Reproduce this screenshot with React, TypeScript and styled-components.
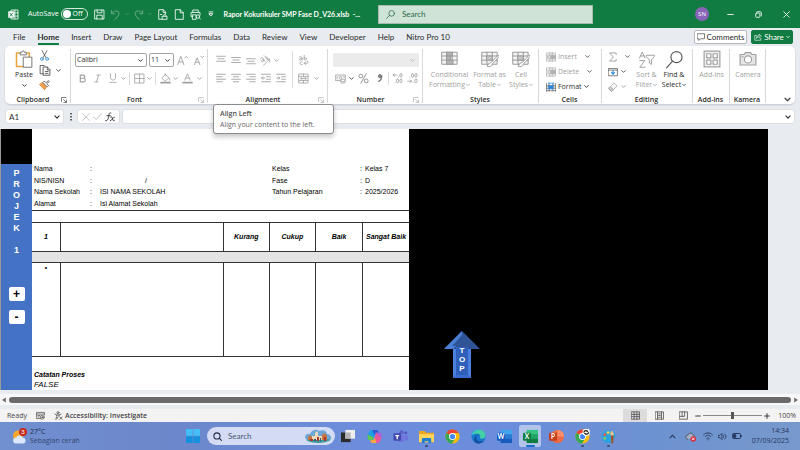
import React from "react";
import styled, { createGlobalStyle, css } from "styled-components";

const GREEN = "#107c41";
const INK = "#2b2b2b";
const FADED = "#a0a0a0";
const CHROME = "#e8ebf0";
const WIDE_TEXT = `Lato, "Open Sans", sans-serif`;

const GlobalStyle = createGlobalStyle`
  *, *::before, *::after { box-sizing: border-box; }
  html, body { margin: 0; padding: 0; }
  body { background: ${CHROME}; overflow: hidden; }
  body, button, input, select {
    font-family: "Open Sans", "Noto Sans", sans-serif;
    font-size: 7px;
    line-height: 10px;
    color: ${INK};
  }
  button, input, select { margin: 0; padding: 0; border: 0; background: none; outline: none; }
  svg { display: block; flex: none; }
`;

/* ---------- drawing helpers ---------- */

type IconProps = { w?: number; h?: number; box?: string; children: React.ReactNode; color?: string; sw?: number };
const Icon = ({ w = 12, h, box = "0 0 16 16", color = "currentColor", sw = 1.2, children }: IconProps) => (
  <svg width={w} height={h ?? w} viewBox={box} fill="none" stroke={color} strokeWidth={sw} strokeLinecap="round" strokeLinejoin="round" aria-hidden="true">
    {children}
  </svg>
);

const Chevron = ({ color = "currentColor", size = 5 }: { color?: string; size?: number }) => (
  <Icon w={size} box="0 0 10 10" color={color} sw={1.8}>
    <path d="M1.5 3.2 5 6.8 8.5 3.2" />
  </Icon>
);

/* ---------- page frame ---------- */

const Page = styled.div`
  display: flex;
  flex-direction: column;
  height: 100vh;
  background: ${CHROME};
`;

/* ---------- title bar ---------- */

const TitleBar = styled.header`
  display: grid;
  grid-template-columns: 370fr 215fr 199fr;
  align-items: center;
  height: 28px;
  padding: 0 8px;
  background: ${GREEN};
  color: #ffffff;
`;

const QuickAccess = styled.div`
  display: flex;
  align-items: center;
  min-width: 0;
`;

const QuickButton = styled.button<{ $w: number; $dim?: boolean }>`
  display: flex;
  align-items: center;
  justify-content: center;
  width: ${(p) => p.$w}px;
  height: 16px;
  flex: none;
  color: ${(p) => (p.$dim ? "#5ba37c" : "#ffffff")};
`;

const AutoSave = styled.label`
  display: flex;
  align-items: center;
  gap: 2px;
  margin: 0 5px 0 9px;
  white-space: nowrap;
`;

const Toggle = styled.button`
  display: flex;
  align-items: center;
  gap: 2px;
  width: 27px;
  height: 12px;
  padding: 0 1px;
  border: 1px solid #d5e8dc;
  border-radius: 6px;
  color: #ffffff;
  &::before {
    content: "";
    width: 8px;
    height: 8px;
    border-radius: 50%;
    background: #ffffff;
  }
`;

const FileName = styled.span`
  margin-left: 5px;
  white-space: pre;
  font-family: ${WIDE_TEXT};
  font-weight: 700;
`;

const TitleSearch = styled.label`
  display: flex;
  align-items: center;
  gap: 7px;
  height: 19px;
  padding: 0 7px;
  border: 1px solid #a9b9ae;
  background: #cfe3d6;
  color: #286847;
`;

const TitleInput = styled.input`
  flex: 1;
  min-width: 0;
  font-family: ${WIDE_TEXT};
  font-size: 8px;
  &::placeholder { color: #286847; opacity: 1; }
`;

const WindowControls = styled.div`
  display: flex;
  align-items: center;
  justify-content: flex-end;
  height: 100%;
`;

const Avatar = styled.button`
  width: 14px;
  height: 14px;
  margin-right: 7px;
  border-radius: 50%;
  background: #8764b8;
  color: #ffffff;
  font-size: 6px;
`;

const WindowButton = styled.button`
  display: flex;
  align-items: center;
  justify-content: center;
  width: 28px;
  height: 28px;
  color: #ffffff;
  &:last-child { margin-right: -8px; }
`;

/* ---------- tabs ---------- */

const TabRow = styled.nav`
  display: flex;
  align-items: center;
  gap: 12px;
  height: 18px;
  padding: 0 7px 0 13px;
`;

const Tab = styled.button<{ $active?: boolean }>`
  height: 18px;
  font-family: ${WIDE_TEXT};
  font-size: 8px;
  white-space: nowrap;
  ${(p) =>
    p.$active &&
    css`
      font-weight: 700;
      border-bottom: 2px solid ${GREEN};
      padding-top: 1px;
      height: 16px;
    `}
`;

const TabActions = styled.div`
  display: flex;
  gap: 4px;
  margin-left: auto;
`;

const ActionButton = styled.button<{ $primary?: boolean }>`
  display: flex;
  align-items: center;
  justify-content: center;
  gap: 2px;
  width: ${(p) => (p.$primary ? 42 : 53)}px;
  height: 14px;
  border: 1px solid ${(p) => (p.$primary ? GREEN : "#b9b9b9")};
  border-radius: 2px;
  background: ${(p) => (p.$primary ? GREEN : "#ffffff")};
  color: ${(p) => (p.$primary ? "#ffffff" : INK)};
  font-family: ${WIDE_TEXT};
  font-size: 8px;
`;

/* ---------- ribbon ---------- */

const Ribbon = styled.section`
  display: grid;
  grid-template-columns: 66fr 137fr 120fr 95fr 116fr 63fr 91fr 37fr 36fr 29fr;
  height: 58px;
  margin: 0 5px;
  border-radius: 5px;
  background: #ffffff;
  box-shadow: 0 1px 2px #c3c7cd;
`;

const GroupBox = styled.div`
  position: relative;
  display: flex;
  flex-direction: column;
  min-width: 0;
  &:not(:last-child)::after {
    content: "";
    position: absolute;
    top: 3px;
    bottom: 3px;
    right: 0;
    width: 1px;
    background: #d9d9d9;
  }
`;

const GroupBody = styled.div<{ $top: number; $left?: number; $center?: boolean }>`
  display: flex;
  flex: 1;
  padding: ${(p) => p.$top}px 0 0 ${(p) => p.$left ?? 0}px;
  justify-content: ${(p) => (p.$center ? "center" : "flex-start")};
`;

const GroupFooter = styled.div`
  display: flex;
  align-items: center;
  height: 12px;
  padding-right: 2px;
  font-weight: 600;
  text-align: center;
  white-space: nowrap;
`;

const FooterName = styled.span`
  flex: 1;
`;

const Launcher = styled.button<{ $dim?: boolean }>`
  width: 8px;
  color: ${(p) => (p.$dim ? "#b5b5b5" : "#555555")};
`;

const Stack = styled.div<{ $w?: number }>`
  display: flex;
  flex-direction: column;
  width: ${(p) => (p.$w ? `${p.$w}px` : "auto")};
`;

const ToolRow = styled.div<{ $h: number }>`
  display: flex;
  align-items: center;
  height: ${(p) => p.$h}px;
`;

const Tool = styled.button<{ $w: number; $on?: boolean }>`
  display: flex;
  align-items: center;
  justify-content: center;
  width: ${(p) => p.$w}px;
  height: 14px;
  flex: none;
  color: ${(p) => (p.$on ? "#444444" : FADED)};
`;

const Divider = styled.span<{ $h: number; $m?: number }>`
  width: 1px;
  height: ${(p) => p.$h}px;
  margin: 0 ${(p) => p.$m ?? 2}px;
  background: #dcdcdc;
`;

const BigTool = styled.button<{ $w: number; $on?: boolean }>`
  display: flex;
  flex-direction: column;
  align-items: center;
  width: ${(p) => p.$w}px;
  height: 40px;
  flex: none;
  white-space: nowrap;
  color: ${(p) => (p.$on ? INK : FADED)};
`;

const BigIcon = styled.span`
  display: flex;
  align-items: center;
  height: 18px;
  margin-bottom: 2px;
`;

const Line = styled.span`
  display: flex;
  align-items: center;
  gap: 1px;
  height: 10px;
`;

const SmallTool = styled.button<{ $on?: boolean; $gap?: number }>`
  display: flex;
  align-items: center;
  gap: 2px;
  height: 15px;
  color: ${(p) => (p.$on ? INK : FADED)};
  > svg:last-child { margin-left: ${(p) => p.$gap ?? 0}px; }
`;

const Picker = styled.label<{ $w: number; $off?: boolean }>`
  display: grid;
  grid-template-columns: 1fr 8px;
  align-items: center;
  width: ${(p) => p.$w}px;
  height: 14px;
  border: 1px solid ${(p) => (p.$off ? "#ebebeb" : "#a5a5a5")};
  border-radius: 2px;
  background: ${(p) => (p.$off ? "#ebebeb" : "#ffffff")};
  color: ${(p) => (p.$off ? "#b5b5b5" : INK)};
  & + & { margin-left: 2px; }
`;

const PickerSelect = styled.select`
  appearance: none;
  grid-column: 1 / -1;
  grid-row: 1;
  padding-left: 1px;
  width: 100%;
  height: 12px;
  & + svg { grid-column: 2; grid-row: 1; pointer-events: none; }
`;

const Tooltip = styled.div`
  position: absolute;
  z-index: 5;
  top: 58px;
  left: 5px;
  width: 121px;
  height: 30px;
  padding: 3px 6px;
  border: 1px solid #8c8c8c;
  border-radius: 3px;
  background: #ffffff;
  box-shadow: 0 3px 5px rgba(0, 0, 0, 0.22);
  color: #666666;
  white-space: nowrap;
  line-height: 11px;
`;

const TooltipTitle = styled.strong`
  display: block;
  color: #505050;
  font-weight: 600;
`;

type GroupProps = { name: string; top: number; left?: number; center?: boolean; launcher?: "on" | "off"; overlay?: React.ReactNode; children: React.ReactNode };
const Group = ({ name, top, left, center, launcher, overlay, children }: GroupProps) => (
  <GroupBox>
    <GroupBody $top={top} $left={left} $center={center}>{children}</GroupBody>
    <GroupFooter>
      <FooterName>{name}</FooterName>
      {launcher && (
        <Launcher $dim={launcher === "off"} aria-label={`${name} settings`}>
          <Icon w={6} box="0 0 12 12" sw={1.5}><path d="M1 9V1h9M5 5l5.500 5.500M11 6v5H6" /></Icon>
        </Launcher>
      )}
    </GroupFooter>
    {overlay}
  </GroupBox>
);

const Lines = ({ rows }: { rows: [number, number, number][] }) => (
  <Icon w={10} sw={1.4}>
    {rows.map(([a, b, y]) => <path key={y} d={`M${a} ${y}H${b}`} />)}
  </Icon>
);

const GridIcon = ({ w = 18, brush, cond }: { w?: number; brush?: boolean; cond?: boolean }) => (
  <Icon w={w} box="0 0 24 24" sw={1.3} color="#999999">
    <rect x="1.500" y="3" width="20" height="16" fill="#f4f4f4" />
    <path d="M1.500 8h20M1.500 13.500h20M8 3v16M15 3v16" />
    {cond && <path d="M8 3h7v5H8zM8 8h5v5.500H8zM8 13.500h8V19H8z" fill="#b5b5b5" />}
    {brush && <path d="M8 8h7v5.500H8z" fill="#c9c9c9" />}
    {brush && <path d="M23 7 13 17c-3-.5-3 3-5 4.500 3 1.500 7 .5 7-2.500L24 9z" fill="#ffffff" />}
  </Icon>
);

const CellIcon = ({ kind }: { kind: "insert" | "delete" | "format" }) => {
  const on = kind === "format";
  return (
    <Icon w={10} color={on ? "#555555" : "#a3a3a3"} sw={1.1}>
      {on ? (
        <>
          <path d="M1 2.500v12M15 2.500v12M1 14h14M1 6h14M5 3v11M11 3v11M1 10h14" />
          <path d="M4.500 1v2.500M11.500 1v2.500M4.500 2h7" stroke="#2b88d8" />
          <rect x="4.500" y="6" width="7" height="5" fill="#2b88d8" stroke="#2b88d8" />
        </>
      ) : (
        <>
          <rect x="1" y="1.500" width="14" height="13" />
          <path d="M1 5h14M1 11h14M10 1.500v13M6 1.500V5M6 11v3.500" />
          <path d={kind === "insert" ? "M8 8H2m2-2L2 8l2 2" : "m2 6 4 4m0-4-4 4"} />
          <rect x="8" y="6" width="7" height="4" fill="#b5b5b5" />
        </>
      )}
    </Icon>
  );
};

const RibbonEnd = styled.div`
  display: flex;
  align-items: flex-end;
  justify-content: flex-end;
`;

const RibbonBar = () => (
  <Ribbon>
    <Group name="Clipboard" top={4} left={5} launcher="on">
      <BigTool $w={28} $on>
        <BigIcon>
          <Icon w={18} box="0 0 24 24" sw={1.3}>
            <path d="M7 4H2v18h9M15 4h4v5" stroke="#e8a33d" strokeWidth="2" />
            <path d="M7 6V3h2.500c0-2.500 3-2.500 3 0H15v3z" stroke="#777777" fill="#ffffff" />
            <path d="M11.500 9.500h11V23h-11z" stroke="#777777" fill="#ffffff" />
          </Icon>
        </BigIcon>
        <Line>Paste</Line>
        <Line><Chevron size={5} /></Line>
      </BigTool>
      <Stack>
        <ToolRow $h={11}>
          <Tool $w={13} $on aria-label="Cut">
            <Icon w={11}><path d="M4.500 1 10 11M11.500 1 6 11" stroke="#555555" /><circle cx="4.200" cy="13" r="2" stroke="#2b88d8" /><circle cx="11.800" cy="13" r="2" stroke="#2b88d8" /></Icon>
          </Tool>
        </ToolRow>
        <ToolRow $h={18}>
          <Tool $w={13} $on aria-label="Copy">
            <Icon w={12} color="#555555"><path d="M6 13H1.500V2H7l1 1" /><path d="M6 4h5l3.500 3.500V15H6zM11 4v4h3.500M8.500 10h3.500M8.500 12.500h3.500" /></Icon>
          </Tool>
          <Tool $w={14} $on aria-label="Copy options"><Chevron /></Tool>
        </ToolRow>
        <ToolRow $h={12}>
          <Tool $w={13} $on aria-label="Format Painter">
            <Icon w={11}><path d="m1 7 7 7 3-4-6-6z" fill="#f2a04b" stroke="#d9812a" /><path d="m6 4 6 6 2-2-2.500-2.500L15 2l-1.500-1L10 4 8 2z" fill="#ffffff" stroke="#555555" /></Icon>
          </Tool>
        </ToolRow>
      </Stack>
    </Group>

    <Group name="Font" top={5} left={4} launcher="off">
      <Stack>
        <ToolRow $h={18}>
          <Picker $w={72}>
            <PickerSelect aria-label="Font name"><option>Calibri</option></PickerSelect>
            <Chevron />
          </Picker>
          <Picker $w={25}>
            <PickerSelect aria-label="Font size"><option>11</option></PickerSelect>
            <Chevron />
          </Picker>
          <Tool $w={16} aria-label="Increase font size">
            <Icon w={11} sw={1.3}><path d="m1 14 4.500-12L10 14M2.500 10h6M11.500 4l2-2 2 2" /></Icon>
          </Tool>
          <Tool $w={16} aria-label="Decrease font size">
            <Icon w={11} sw={1.3}><path d="m2 14 4-10 4 10M3.500 10.500h5M11.500 2l2 2 2-2" /></Icon>
          </Tool>
        </ToolRow>
        <ToolRow $h={18}>
          <Tool $w={15} aria-label="Bold"><Icon w={9} sw={2}><path d="M4 2h5c4 0 4 5.500 0 5.500H4zM4 7.500h6c4 0 4 6.500 0 6.500H4z" /></Icon></Tool>
          <Tool $w={15} aria-label="Italic"><Icon w={9} sw={1.4}><path d="M7 2h6M3 14h6M10 2 6 14" /></Icon></Tool>
          <Tool $w={15} aria-label="Underline"><Icon w={10} sw={1.3}><path d="M4 1v6.500c0 5 8 5 8 0V1M3 15h10" /></Icon></Tool>
          <Tool $w={7} aria-label="Underline options"><Chevron /></Tool>
          <Divider $h={13} />
          <Tool $w={14} aria-label="Borders"><Icon w={11}><path d="M1.500 1.500h13v13h-13zM8 1.500v13M1.500 8h13" /></Icon></Tool>
          <Tool $w={7} aria-label="Border options"><Chevron /></Tool>
          <Divider $h={13} />
          <Tool $w={14} aria-label="Fill color"><Icon w={11}><path d="m3 7 5-5 5 5-5 4.500zM7 1l2 3M14 8v2.500" /><path d="M1.500 14h13" strokeWidth="2.500" /></Icon></Tool>
          <Tool $w={7} aria-label="Fill options"><Chevron /></Tool>
          <Tool $w={17} aria-label="Font color"><Icon w={11}><path d="M4 10.500 8 1l4 9.500M5.500 7.500h5" /><path d="M1.500 14h13" strokeWidth="2.500" /></Icon></Tool>
          <Tool $w={7} aria-label="Font color options"><Chevron /></Tool>
        </ToolRow>
      </Stack>
    </Group>

    <Group
      name="Alignment"
      top={5}
      left={5}
      launcher="off"
      overlay={
        <Tooltip role="tooltip">
          <TooltipTitle>Align Left</TooltipTitle>
          Align your content to the left.
        </Tooltip>
      }
    >
      <Stack $w={77}>
        <ToolRow $h={18}>
          <Tool $w={15} aria-label="Top Align"><Lines rows={[[1, 15, 2], [3, 13, 6], [1, 15, 10]]} /></Tool>
          <Tool $w={15} aria-label="Middle Align"><Lines rows={[[1, 15, 4], [3, 13, 8], [1, 15, 12]]} /></Tool>
          <Tool $w={15} aria-label="Bottom Align"><Lines rows={[[1, 15, 6], [3, 13, 10], [1, 15, 14]]} /></Tool>
          <Tool $w={15} aria-label="Orientation"><Icon w={11}><path d="m5 15 9-9m0 4V6h-4" /><path d="M1 5c2-3 3-1 4 1L7 9M5 7C3 6 1 8 2.500 9.500S6 9 5 7M6 1l5 5M8.500 4c1-2 4 0 2 2" /></Icon></Tool>
          <Tool $w={7} aria-label="Orientation options"><Chevron /></Tool>
        </ToolRow>
        <ToolRow $h={18}>
          <Tool $w={15} aria-label="Align Left"><Lines rows={[[1, 15, 2], [1, 10, 6], [1, 15, 10], [1, 10, 14]]} /></Tool>
          <Tool $w={15} aria-label="Center"><Lines rows={[[1, 15, 2], [4, 12, 6], [1, 15, 10], [4, 12, 14]]} /></Tool>
          <Tool $w={15} aria-label="Align Right"><Lines rows={[[1, 15, 2], [6, 15, 6], [1, 15, 10], [6, 15, 14]]} /></Tool>
          <Tool $w={15} aria-label="Decrease Indent"><Icon w={10} sw={1.4}><path d="M1 2h14M9 6h6M9 10h6M1 14h14M6 8H1m2-2L1 8l2 2" /></Icon></Tool>
          <Tool $w={15} aria-label="Increase Indent"><Icon w={10} sw={1.4}><path d="M1 2h14M9 6h6M9 10h6M1 14h14M1 8h5M4 6l2 2-2 2" /></Icon></Tool>
        </ToolRow>
      </Stack>
      <Divider $h={37} />
      <Stack>
        <ToolRow $h={18}>
          <Tool $w={16} aria-label="Wrap Text"><Icon w={11}><path d="M2 3c3-2 4 0 4 4M6 5C1 4 1 8 4 7.500L6 6M9 0v7c5 1 5-4 0-3M6 10c-4-2-5 5 0 4M9 12h4c2.500 0 2.500-3 0-3M11 10l-2 2 2 2" /></Icon></Tool>
        </ToolRow>
        <ToolRow $h={18}>
          <Tool $w={16} aria-label="Merge and Center"><Icon w={11}><path d="M1.500 1.500h13v13h-13zM1.500 5h13M1.500 11h13M8 1.500V5M8 11v3.500M4 8h8M5.500 6.500 4 8l1.500 1.500M10.500 6.500 12 8l-1.500 1.500" /></Icon></Tool>
          <Tool $w={11} aria-label="Merge options"><Chevron /></Tool>
        </ToolRow>
      </Stack>
    </Group>

    <Group name="Number" top={5} left={5} launcher="off">
      <Stack>
        <ToolRow $h={18}>
          <Picker $w={86} $off>
            <PickerSelect aria-label="Number format" disabled><option> </option></PickerSelect>
            <Chevron />
          </Picker>
        </ToolRow>
        <ToolRow $h={18}>
          <Tool $w={15} aria-label="Accounting format"><Icon w={11}><path d="M1 3h14v8H1zM8 5a2 2 0 1 0 0 4 2 2 0 0 0 0-4M3 5v4M13 5v2" /><path d="M8.500 10v4c0 1 6 1 6 0v-4c0-1-6-1-6 0M8.500 12c0 1 6 1 6 0" fill="#ffffff" /></Icon></Tool>
          <Tool $w={7} $on aria-label="Accounting options"><Chevron /></Tool>
          <Tool $w={17} aria-label="Percent"><Icon w={11} sw={1.5}><circle cx="4" cy="4.500" r="2.700" /><circle cx="12" cy="11.500" r="2.700" /><path d="m12 1-8 14" /></Icon></Tool>
          <Tool $w={15} aria-label="Comma style"><Icon w={10} color="#777777" sw={1.5}><circle cx="8" cy="5" r="2.600" fill="#888888" /><path d="M10.700 5c0 5-2 7-4.700 8.500" strokeWidth="2" /></Icon></Tool>
          <Divider $h={13} $m={1} />
          <Tool $w={15} aria-label="Increase decimal"><Icon w={11}><path d="M7 3H1.500m2-2-2 2 2 2M9.500 6v.1M4.500 14v.1" /><rect x="11.500" y="1" width="3" height="5" rx="1.500" /><rect x="6.500" y="9" width="3" height="5" rx="1.500" /><rect x="11.500" y="9" width="3" height="5" rx="1.500" /></Icon></Tool>
          <Tool $w={15} aria-label="Decrease decimal"><Icon w={11}><path d="M1 12h5.500m-2-2 2 2-2 2M3.500 6v.1M9 14v.1" /><rect x="6.500" y="1" width="3" height="5" rx="1.500" /><rect x="11.500" y="1" width="3" height="5" rx="1.500" /><rect x="11.500" y="9" width="3" height="5" rx="1.500" /></Icon></Tool>
        </ToolRow>
      </Stack>
    </Group>

    <Group name="Styles" top={4} left={4}>
      <BigTool $w={45}>
        <BigIcon><GridIcon cond /></BigIcon>
        <Line>Conditional</Line>
        <Line>Formatting <Chevron size={4} /></Line>
      </BigTool>
      <BigTool $w={35}>
        <BigIcon><GridIcon brush /></BigIcon>
        <Line>Format as</Line>
        <Line>Table <Chevron size={4} /></Line>
      </BigTool>
      <BigTool $w={28}>
        <BigIcon><GridIcon brush /></BigIcon>
        <Line>Cell</Line>
        <Line>Styles <Chevron size={4} /></Line>
      </BigTool>
    </Group>

    <Group name="Cells" top={3} left={7}>
      <Stack>
        <SmallTool $gap={6}><CellIcon kind="insert" />Insert<Chevron color="#555555" /></SmallTool>
        <SmallTool $gap={6}><CellIcon kind="delete" />Delete<Chevron color="#555555" /></SmallTool>
        <SmallTool $on><CellIcon kind="format" />Format<Chevron /></SmallTool>
      </Stack>
    </Group>

    <Group name="Editing" top={3} left={6}>
      <Stack $w={24}>
        <SmallTool $gap={5} aria-label="AutoSum"><Icon w={10} sw={1.5}><path d="M13 4V1.500H2.500L8.500 8l-6 6.500H13V12" /></Icon><Chevron color="#555555" /></SmallTool>
        <SmallTool $gap={1} aria-label="Fill"><Icon w={10} color="#555555"><path d="M1 2.500h14v11.500H1zM1 5h14" /><path d="M8 6v5.500M5.500 9 8 11.500 10.500 9" stroke="#2b88d8" strokeWidth="1.800" /></Icon><Chevron color="#555555" /></SmallTool>
        <SmallTool $gap={1} aria-label="Clear"><Icon w={10}><path d="m1.500 10 8-8.500 5 4.500-8 8.500H5z" /><path d="m4 7.500 5 4.500-2.500 2.500H5L1.500 10z" fill="#cccccc" /></Icon><Chevron /></SmallTool>
      </Stack>
      <Stack>
        <ToolRow $h={42}>
          <BigTool $w={29}>
            <BigIcon>
              <Icon w={17} box="0 0 24 24" sw={1.4}><path d="m2 10 4-8.500L10 10M3.500 7h5M2.500 13.500h7L2.500 23h7.500M12 6h11v2l-4 4.500V19l-3-2v-4.500L12 8z" /></Icon>
            </BigIcon>
            <Line>Sort &amp;</Line>
            <Line>Filter <Chevron size={4} /></Line>
          </BigTool>
          <BigTool $w={26} $on>
            <BigIcon>
              <Icon w={19} box="0 0 24 24" sw={1.4} color="#555555"><circle cx="14.500" cy="9" r="7" /><path d="M9.500 14 2 22.500" /></Icon>
            </BigIcon>
            <Line>Find &amp;</Line>
            <Line>Select <Chevron size={4} /></Line>
          </BigTool>
        </ToolRow>
      </Stack>
    </Group>

    <Group name="Add-ins" top={4} center>
      <BigTool $w={34}>
        <BigIcon><Icon w={18} box="0 0 24 24" sw={1.6}><path d="M1.500 1.500h21v21h-21z" fill="#f4f4f4" /><path d="M5 5h5.500v5.500H5zM13.500 5H19v5.500h-5.500zM5 13.500h5.500V19H5zM13.500 13.500H19V19h-5.500z" fill="#ffffff" /></Icon></BigIcon>
        <Line>Add-ins</Line>
      </BigTool>
    </Group>

    <Group name="Kamera" top={4} center>
      <BigTool $w={34}>
        <BigIcon><Icon w={18} box="0 0 24 24" sw={1.6}><path d="M1.500 6H7l1.500-2.500h7L17 6h5.500v14h-21z" fill="#e6e6e6" /><circle cx="12" cy="12.500" r="4.800" fill="#ffffff" /><path d="M4 9h1.500" /></Icon></BigIcon>
        <Line>Camera</Line>
      </BigTool>
    </Group>

    <RibbonEnd>
      <Tool $w={16} $on aria-label="Ribbon display options"><Chevron size={7} /></Tool>
    </RibbonEnd>
  </Ribbon>
);

/* ---------- formula bar ---------- */

const FormulaBar = styled.div`
  display: flex;
  align-items: center;
  height: 25px;
  padding: 0 5px;
`;

const WhiteBox = styled.div<{ $w?: number }>`
  display: flex;
  align-items: center;
  justify-content: space-around;
  width: ${(p) => (p.$w ? `${p.$w}px` : "auto")};
  flex: ${(p) => (p.$w ? "none" : "1")};
  height: 15px;
  padding: 0 3px;
  border: 1px solid #dcdfe3;
  border-radius: 3px;
  background: #ffffff;
  & + & { margin-left: 2px; }
`;

const BarInput = styled.input`
  flex: 1;
  min-width: 0;
  font-family: ${WIDE_TEXT};
  font-size: 8px;
`;

const Dots = styled.span`
  width: 13px;
  display: flex;
  justify-content: center;
`;

const BarButton = styled.button`
  display: flex;
  align-items: center;
`;

/* ---------- worksheet ---------- */

const Workspace = styled.main`
  display: grid;
  grid-template-columns: 32fr 377fr 359fr 32fr;
  flex: 1;
  min-height: 0;
  overflow: hidden;
  font-family: "Liberation Sans", Arial, sans-serif;
`;

const SideStrip = styled.aside`
  display: flex;
  flex-direction: column;
  align-items: center;
  border-left: 1px solid #9a9a9a;
  background: #4472c4;
  color: #ffffff;
`;

const SideCap = styled.div`
  align-self: stretch;
  height: 35px;
  margin-bottom: 4px;
  background: #000000;
`;

const SideTitle = styled.div`
  height: 119px;
  white-space: pre;
  text-align: center;
  font-size: 9px;
  line-height: 11px;
  font-weight: 700;
`;

const SideButton = styled.button`
  width: 16px;
  height: 14px;
  margin-bottom: 9px;
  border-radius: 2px;
  background: #ffffff;
  color: #000000;
  font-family: inherit;
  font-size: 12px;
  line-height: 14px;
  font-weight: 700;
`;

const Sheet = styled.section`
  background: #ffffff;
  color: #000000;
  padding-top: 34px;
`;

const Identity = styled.div`
  display: grid;
  grid-template-columns: 56fr 10fr 172fr 88fr 5fr 44fr;
  grid-template-rows: repeat(4, 1fr);
  align-items: center;
  height: 47px;
  padding-left: 2px;
  white-space: nowrap;
`;

const Slash = styled.span`
  padding-left: 45px;
`;

const ReportTable = styled.table`
  width: 100%;
  border-collapse: collapse;
  table-layout: fixed;
  text-align: center;
  th, td { padding: 0; border: 1px solid #333333; border-width: 1px 0 1px 1px; }
  th:first-child, td:first-child { border-left: 0; }
  th { font-style: italic; font-weight: 700; white-space: nowrap; }
`;

const SpacerRow = styled.tr<{ $h: number; $fill?: string }>`
  height: ${(p) => p.$h}px;
  background: ${(p) => p.$fill ?? "#ffffff"};
`;

const HeadRow = styled.tr`
  height: 29px;
`;

const BodyRow = styled.tr`
  height: 94px;
  vertical-align: top;
`;

const Notes = styled.div`
  padding: 12px 0 0 2px;
  line-height: 11px;
  font-style: italic;
`;

const NoteValue = styled.div`
  font-size: 8px;
  line-height: 10px;
`;

const BlackArea = styled.section`
  display: flex;
  align-items: flex-end;
  padding: 0 0 11px 35px;
  background: #000000;
`;

const TopButton = styled.button`
  display: grid;
  justify-items: center;
  width: 36px;
  height: 48px;
  color: #ffffff;
  > * { grid-area: 1 / 1; }
`;

const TopText = styled.span`
  padding-top: 15px;
  white-space: pre;
  font: 700 8px/9px "Liberation Sans", Arial, sans-serif;
`;

/* ---------- scroll and status ---------- */

const ScrollRow = styled.div`
  display: flex;
  align-items: center;
  gap: 2px;
  height: 11px;
  margin: 4px 0;
  padding: 0 1px;
  background: #f8f8f9;
`;

const ScrollThumb = styled.div`
  flex: 1;
  height: 6px;
  border-radius: 3px;
  background: #6b6b6b;
`;

const StatusBar = styled.footer`
  display: flex;
  align-items: center;
  height: 13px;
  padding: 0 4px 0 7px;
  background: #f3f3f3;
  color: #444444;
`;

const StatusItem = styled.span<{ $w: number; $bold?: boolean }>`
  display: flex;
  align-items: center;
  gap: 2px;
  width: ${(p) => p.$w}px;
  font-weight: ${(p) => (p.$bold ? 600 : 400)};
  white-space: nowrap;
`;

const ViewButtons = styled.div`
  display: flex;
  margin-left: auto;
`;

const ViewButton = styled.button<{ $active?: boolean }>`
  display: flex;
  align-items: center;
  justify-content: center;
  width: 24px;
  height: 13px;
  background: ${(p) => (p.$active ? "#dcdcdc" : "transparent")};
`;

const Zoom = styled.div`
  display: flex;
  align-items: center;
  gap: 2px;
`;

const ZoomSlider = styled.input`
  appearance: none;
  width: 59px;
  height: 10px;
  background: linear-gradient(#888888, #888888) center / 100% 1px no-repeat;
  &::-webkit-slider-thumb {
    appearance: none;
    width: 3px;
    height: 7px;
    background: #555555;
  }
`;

const ZoomValue = styled.span`
  width: 24px;
  text-align: right;
`;

/* ---------- taskbar ---------- */

const Taskbar = styled.footer`
  display: grid;
  grid-template-columns: 180px 1fr 140px;
  align-items: center;
  height: 28px;
  background: linear-gradient(90deg, #7190d0 0%, #6c87cb 22%, #6d8ddc 45%, #6b8ddb 65%, #6e93cf 85%, #7799cc 100%);
`;

const Weather = styled.button`
  display: flex;
  align-items: center;
  gap: 3px;
  padding-left: 11px;
  text-align: left;
  line-height: 9px;
  color: #1c2b4c;
`;

const WeatherSky = styled.span`
  display: block;
  color: #33466f;
`;

const Apps = styled.div`
  display: flex;
  align-items: center;
`;

const AppButton = styled.button<{ $active?: boolean; $mark?: boolean }>`
  position: relative;
  display: flex;
  align-items: center;
  justify-content: center;
  width: 22px;
  height: 22px;
  margin: 0 2px;
  flex: none;
  border-radius: 2px;
  background: ${(p) => (p.$active ? "#b3c4ea" : "transparent")};
  ${(p) =>
    (p.$active || p.$mark) &&
    css`
      &::after {
        content: "";
        position: absolute;
        bottom: 0;
        width: ${p.$active ? 9 : 3}px;
        height: 2px;
        border-radius: 1px;
        background: ${p.$active ? "#1673c9" : "#3b4c78"};
      }
    `}
`;

const TaskSearch = styled.label`
  display: flex;
  align-items: center;
  gap: 6px;
  width: 128px;
  height: 18px;
  margin-left: 1px;
  padding: 0 3px 0 6px;
  border-radius: 9px;
  background: #d3dcf3;
`;

const TaskInput = styled.input`
  flex: 1;
  min-width: 0;
  font-family: ${WIDE_TEXT};
  font-size: 8px;
  &::placeholder { color: #4c5876; opacity: 1; }
`;

const Tray = styled.div`
  display: flex;
  align-items: center;
  justify-content: flex-end;
  padding-right: 11px;
  color: #26365c;
`;

const TrayButton = styled.button<{ $w: number }>`
  display: flex;
  justify-content: center;
  width: ${(p) => p.$w}px;
  color: inherit;
`;

const Clock = styled.time`
  width: 43px;
  text-align: right;
  line-height: 10px;
  white-space: nowrap;
`;

const Chrome = ({ badge }: { badge?: boolean }) => (
  <Icon w={15} sw={0}>
    <circle cx="8" cy="8" r="7.500" fill="#fbbc05" />
    <path d="M8 8 1.500 4.200A7.500 7.500 0 0 1 14.500 4.300H8z" fill="#ea4335" />
    <path d="M8 8 1.500 4.200A7.500 7.500 0 0 0 7.500 15.500L11 9.500z" fill="#34a853" />
    <circle cx="8" cy="8" r="3.700" fill="#ffffff" />
    <circle cx="8" cy="8" r="2.800" fill="#4285f4" />
    {badge && <circle cx="12" cy="3.500" r="4" fill="#ffffff" />}
    {badge && <path d="M9.500 3.200c1-2.200 3-1.500 4-.7M14.500 4c-1 2.200-3 1.500-4 .7" stroke="#111111" strokeWidth="1.300" />}
  </Icon>
);

const OfficeTile = ({ letter, base, dark, light, round }: { letter: string; base: string; dark: string; light: string; round?: boolean }) => (
  <Icon w={15} sw={0}>
    {round ? (
      <><circle cx="9" cy="8" r="7" fill={base} /><path d="M9 1a7 7 0 0 1 7 7H9z" fill={light} /></>
    ) : (
      <><rect x="4" y="1" width="12" height="14" rx="1" fill={base} /><rect x="4" y="1" width="12" height="4.500" fill={light} /><rect x="4" y="10.500" width="12" height="4.500" fill={dark} /></>
    )}
    <rect x="0" y="4" width="8.500" height="8.500" rx="1" fill={dark} />
    <text x="4.250" y="10.600" fontSize="7" fontWeight="700" fontFamily="Lato, sans-serif" textAnchor="middle" fill="#ffffff">{letter}</text>
  </Icon>
);

const TaskbarView = () => (
  <Taskbar>
    <Weather>
      <Icon w={16} sw={0}>
        <circle cx="7" cy="7.500" r="5" fill="#f7a72c" />
        <path d="M5 15.500a3 3 0 0 1 .3-6c1-2.600 5-2.600 6 0 4-.3 4.500 6 .7 6z" fill="#dce8fb" />
        <circle cx="12" cy="4" r="4" fill="#c42b1c" />
        <text x="12" y="6.300" fontSize="6.500" fontFamily="Lato, sans-serif" textAnchor="middle" fill="#ffffff">3</text>
      </Icon>
      <span>27°C<WeatherSky>Sebagian cerah</WeatherSky></span>
    </Weather>
    <Apps>
      <AppButton aria-label="Start">
        <Icon w={14} sw={0}><path d="M0 0h7.600v7.600H0zM8.400 0H16v7.600H8.400z" fill="#45bdf5" /><path d="M0 8.400h7.600V16H0zM8.400 8.400H16V16H8.400z" fill="#1691e0" /></Icon>
      </AppButton>
      <TaskSearch>
        <Icon w={9} color="#222b44" sw={1.900}><circle cx="7" cy="7" r="5.500" /><path d="m11 11 4 4" /></Icon>
        <TaskInput placeholder="Search" aria-label="Search Windows" />
        <Icon w={28} h={15} box="0 0 28 15" sw={0}>
          <path d="M3 11C-1 8 2 4 6 5c2-5 7-5 9-3 4-2 8 0 8 3 4 0 6 5 2 7z" fill="#6ea6d8" />
          <path d="M2 11c5-2 18-3 24 0-4 4-19 4-24 0" fill="#3d9a9a" />
          <path d="M4 11V8l2-2 2 2v3zM18 11V6l3-2 2 3v4z" fill="#c9723b" />
          <path d="M8 11V7h3V4l2-2 1 2v3h4v4z" fill="#efd9b4" />
          <path d="M6 10h3v2H6zM13 8h2v4h-2zM20 8h2v4h-2z" fill="#a33a2c" />
          <path d="M10 10h2v2h-2zM16 9h1v3h-1z" fill="#35507c" />
        </Icon>
      </TaskSearch>
      <AppButton aria-label="Task View">
        <Icon w={14} sw={0}><path d="M0 4h11v11H0z" fill="#2b2b2b" /><path d="M5 1h11v10H5z" fill="#eeeeee" /><path d="M5 4h6v7H5z" fill="#b4b4b4" /></Icon>
      </AppButton>
      <AppButton aria-label="Copilot">
        <Icon w={15} sw={0}>
          <path d="M5 1h5c1.500 0 2 1 2.500 3H9L6 12H3C0 12 0 9 1 6s2-5 4-5z" fill="#1fa0e6" />
          <path d="M5.500 1H10c1.500 0 2 1 2.500 3H9L8 7z" fill="#3457d5" />
          <path d="M1 6c-1 4 0 6 2 6h3l1-3z" fill="#62c653" />
          <path d="M11 15H6c-1.500 0-2-1-2.500-3H7l3-8h3c3 0 3 3 2 6s-2 5-4 5z" fill="#e8579a" />
          <path d="M10 15H6c-1.500 0-2-1-2.500-3H7l1.500-3z" fill="#f6b03a" />
          <path d="M10 4h3c3 0 3 3 2 5z" fill="#a061e8" />
        </Icon>
      </AppButton>
      <AppButton aria-label="Teams">
        <Icon w={15} sw={0}><circle cx="9" cy="3.500" r="2.200" fill="#5b61c9" /><circle cx="13.500" cy="4" r="1.700" fill="#5158c0" /><path d="M6 6.500h6V12c0 3-6 3-6 0zM12.500 6.500H16V11c0 2-3.500 2-3.500 0z" fill="#6f75dc" /><rect x="0.500" y="4.500" width="8" height="8" rx="1" fill="#4048ae" /><path d="M2.500 6.500h4v1.200H5.200V11H3.800V7.700H2.500z" fill="#ffffff" /></Icon>
      </AppButton>
      <AppButton $mark aria-label="File Explorer">
        <Icon w={15} sw={0}><path d="M0 2h6l2 2h8v10H0z" fill="#e9a820" /><path d="M0 5.500h16V14H0z" fill="#ffd45c" /><path d="M3 15v-4c0-1 .5-1.500 1.500-1.500h7c1 0 1.500.5 1.500 1.500v4h-3v-2H6v2z" fill="#1f7fd1" /></Icon>
      </AppButton>
      <AppButton aria-label="Chrome"><Chrome /></AppButton>
      <AppButton aria-label="Edge">
        <Icon w={15} sw={0}>
          <circle cx="8" cy="8" r="7.500" fill="#1b78cf" />
          <path d="M.6 7C2-2 15-1 15.500 7c0 4-6 4-6 2 1-1 .5-4-2.500-4S1.500 5.500.6 7z" fill="#45cfa5" />
          <path d="M.6 7C2 1 7-.5 11 1 6 0 3 4 2 6z" fill="#35b5e5" />
          <path d="M5.500 9c0 4 4 5.500 8.500 3.500-3 4-8.500 3.500-10 1S4 6 7.500 6C6 7 5.500 8 5.500 9z" fill="#0f4f9e" />
        </Icon>
      </AppButton>
      <AppButton aria-label="Word"><OfficeTile letter="W" base="#2b7cd3" dark="#185abd" light="#41a5ee" /></AppButton>
      <AppButton $active aria-label="Excel"><OfficeTile letter="X" base="#21a366" dark="#107c41" light="#33c481" /></AppButton>
      <AppButton aria-label="PowerPoint"><OfficeTile letter="P" base="#ed6c47" dark="#c43e1c" light="#ff8f6b" round /></AppButton>
      <AppButton $mark aria-label="Chrome profile"><Chrome badge /></AppButton>
      <AppButton $mark aria-label="Paint">
        <Icon w={15} sw={0}><path d="M8 1c5 0 7.500 3 7.500 6S12 10 11 11s1 4-3 4S.5 12 .5 8 3 1 8 1z" fill="#2ba3df" /><circle cx="4" cy="6" r="1.500" fill="#f05a3c" /><circle cx="7.500" cy="3.800" r="1.500" fill="#ffd54a" /><circle cx="4" cy="10" r="1.500" fill="#7ad06d" /><path d="M11 2c2 0 3 3 2.500 5H10c0-2 0-4 1-5z" fill="#f3c18a" /><path d="M10.500 7h3l-.5 8c0 1-2 1-2 0z" fill="#9a5a2c" /></Icon>
      </AppButton>
    </Apps>
    <Tray>
      <TrayButton $w={16} aria-label="Show hidden icons"><Icon w={7} box="0 0 10 10" sw={1.500}><path d="M1.500 6.800 5 3.200 8.500 6.800" /></Icon></TrayButton>
      <TrayButton $w={20} aria-label="OneDrive">
        <Icon w={11}><path d="M4 12a3 3 0 0 1 0-6c1.500-4 7-3.500 8 0 2 0 3 2 2.500 3.500" stroke="#4c4f60" fill="#a5adc4" /><circle cx="12" cy="11.500" r="4" fill="#d9303e" stroke="none" /><path d="m10.700 10.200 2.600 2.600m0-2.600-2.600 2.600" stroke="#ffffff" /></Icon>
      </TrayButton>
      <TrayButton $w={16} aria-label="Wi-Fi"><Icon w={10} sw={1.500}><path d="M1 6c4-4 10-4 14 0M3.500 9c3-3 6-3 9 0M6 12c1.500-1.500 2.500-1.500 4 0M8 14v.2" /></Icon></TrayButton>
      <TrayButton $w={12} aria-label="Volume"><Icon w={9} sw={1.500}><path d="M1 6h2.500L7 2.500v11L3.500 10H1zM9.500 6c1 1 1 3 0 4M12 3.500c3 3 3 6 0 9" /></Icon></TrayButton>
      <TrayButton $w={18} aria-label="Battery"><Icon w={10} sw={1.600}><rect x="1" y="4" width="12.500" height="8" rx="1.500" /><path d="M15.500 7v2M3 6h3v4H3z" fill="#26365c" /></Icon></TrayButton>
      <Clock>14:34<br />07/09/2025</Clock>
    </Tray>
  </Taskbar>
);

/* ---------- application ---------- */

const tabs = ["File", "Home", "Insert", "Draw", "Page Layout", "Formulas", "Data", "Review", "View", "Developer", "Help", "Nitro Pro 10"];

const identityRows: React.ReactNode[][] = [
  ["Nama", ":", "", "Kelas", ":", "Kelas 7"],
  ["NIS/NISN", ":", <Slash key="slash">/</Slash>, "Fase", ":", "D"],
  ["Nama Sekolah", ":", "ISI NAMA SEKOLAH", "Tahun Pelajaran", ":", "2025/2026"],
  ["Alamat", ":", "Isi Alamat Sekolah", "", "", ""],
];

const headings = ["1", "", "Kurang", "Cukup", "Baik", "Sangat Baik"];
const columnShares = ["7.500%", "43.300%", "12.100%", "12.300%", "12.500%", "12.300%"];

const Col = styled.col<{ $share: string }>`
  width: ${(p) => p.$share};
`;

export default function App() {
  return (
    <Page>
      <GlobalStyle />
      <TitleBar>
        <QuickAccess>
          <Icon w={11} sw={1.200}><path d="M5 1.500h9.500v13H5zM5 5.700h9.500M5 10.300h9.500M10 1.500v13" /><rect x="1" y="4" width="7.500" height="8" fill="#ffffff" /><path d="m3 6 3.500 4.500M6.500 6 3 10.500" stroke={GREEN} /></Icon>
          <AutoSave>AutoSave <Toggle role="switch" aria-checked="false">Off</Toggle></AutoSave>
          <QuickButton $w={14} aria-label="Save"><Icon w={11}><path d="M1.500 1.500h13v13h-13zM4.500 1.500v4h7v-4M4 14.500V9h8v5.500" /></Icon></QuickButton>
          <QuickButton $w={17} $dim aria-label="Undo"><Icon w={11} sw={1.500}><path d="M2 2v5h5M2.500 6.500C6 1 13 2 13 7c0 3-3 5-6 8" /></Icon></QuickButton>
          <QuickButton $w={6} $dim aria-label="Undo options"><Chevron size={4} /></QuickButton>
          <QuickButton $w={17} $dim aria-label="Redo"><Icon w={11} sw={1.500}><path d="M14 2v5H9M13.500 6.500C10 1 3 2 3 7c0 3 3 5 6 8" /></Icon></QuickButton>
          <QuickButton $w={6} $dim aria-label="Redo options"><Chevron size={4} /></QuickButton>
          <QuickButton $w={19} aria-label="Protect file"><Icon w={11}><path d="M7 15H2.500V1H9l3.500 3.500V7M9 1v4h3.500" /><path d="M8 10.500h6.500V15H8zM9.500 10.500c0-4 3.500-4 3.500 0M5 8h2" /></Icon></QuickButton>
          <QuickButton $w={15} aria-label="New"><Icon w={11}><path d="M2.500 1H9l4.500 4.500V15h-11zM9 1v4.500h4.500" /></Icon></QuickButton>
          <QuickButton $w={17} aria-label="Print preview"><Icon w={11}><path d="M4 5V1.500h8V5M4 11H1.500V5h13v4M4 8.500h5V15H4z" /><circle cx="11.500" cy="11" r="2.500" /><path d="m13.500 13 2 2" /></Icon></QuickButton>
          <QuickButton $w={15} aria-label="Customize toolbar"><Icon w={6} box="0 0 10 10" sw={1.500}><path d="M2 1.500h6M2 4.500h6L5 8z" /></Icon></QuickButton>
          <FileName>{"Rapor Kokurikuler SMP Fase D_V26.xlsb  -..."}</FileName>
        </QuickAccess>
        <TitleSearch>
          <Icon w={9} sw={1.300}><circle cx="10" cy="6" r="5" /><path d="M6.500 9.500 1 15" /></Icon>
          <TitleInput placeholder="Search" aria-label="Search" />
        </TitleSearch>
        <WindowControls>
          <Avatar aria-label="Account">SN</Avatar>
          <WindowButton aria-label="Minimize"><Icon w={7} box="0 0 10 10"><path d="M1 5h8" /></Icon></WindowButton>
          <WindowButton aria-label="Restore"><Icon w={7} box="0 0 10 10"><rect x="1" y="3" width="6" height="6" rx="1" /><path d="M3 1h4.500Q9 1 9 2.500V7" /></Icon></WindowButton>
          <WindowButton aria-label="Close"><Icon w={7} box="0 0 10 10"><path d="m1 1 8 8m0-8L1 9" /></Icon></WindowButton>
        </WindowControls>
      </TitleBar>

      <TabRow>
        {tabs.map((t) => <Tab key={t} $active={t === "Home"}>{t}</Tab>)}
        <TabActions>
          <ActionButton><Icon w={8}><path d="M1 1.500h14v10H7L3.500 15v-3.500H1z" /></Icon>Comments</ActionButton>
          <ActionButton $primary><Icon w={8}><path d="M5 5H1.500v9.500h12V11M5 10c0-4 3-5 5.500-5V2L15 6.500 10.500 10V7.500C8 7.500 6 8 5 10z" /></Icon>Share<Chevron size={4} /></ActionButton>
        </TabActions>
      </TabRow>

      <RibbonBar />

      <FormulaBar>
        <WhiteBox $w={59}>
          <BarInput aria-label="Name box" defaultValue="A1" />
          <Chevron size={6} />
        </WhiteBox>
        <Dots><Icon w={2} h={8} box="0 0 2 8" sw={0}><path d="M0 0h2v1.500H0zM0 3h2v1.500H0zM0 6h2v1.500H0z" fill="#666666" /></Icon></Dots>
        <WhiteBox $w={43}>
          <BarButton aria-label="Cancel"><Icon w={8} color="#b5b5b5" sw={1.500}><path d="m1 1 14 14m0-14L1 15" /></Icon></BarButton>
          <BarButton aria-label="Enter"><Icon w={9} color="#b5b5b5" sw={1.500}><path d="m1 9 4.500 4.500L15 3" /></Icon></BarButton>
          <BarButton aria-label="Insert function"><Icon w={10} color="#333333" sw={1.500}><path d="M9.500 1.500C7 0 6.500 3 6 6s-1 9-5 8M3 6h5.500M9 8c2-1.500 2.500 1 3 3s1 4 3 2.500M15 8c-2 0-4 6-6.500 6" /></Icon></BarButton>
        </WhiteBox>
        <WhiteBox>
          <BarInput aria-label="Formula" />
          <Chevron size={6} />
        </WhiteBox>
      </FormulaBar>

      <Workspace>
        <SideStrip>
          <SideCap />
          <SideTitle>{"P\nR\nO\nJ\nE\nK\n\n1"}</SideTitle>
          <SideButton>+</SideButton>
          <SideButton>-</SideButton>
        </SideStrip>
        <Sheet>
          <Identity>
            {identityRows.flatMap((row, r) => row.map((cell, c) => <span key={`${r}-${c}`}>{cell}</span>))}
          </Identity>
          <ReportTable>
            <colgroup>{columnShares.map((s, i) => <Col key={i} $share={s} />)}</colgroup>
            <tbody>
              <SpacerRow $h={12}><td colSpan={6} /></SpacerRow>
              <HeadRow>{headings.map((h, i) => <th key={i}>{h}</th>)}</HeadRow>
              <SpacerRow $h={11} $fill="#e4e4e4"><td colSpan={6} /></SpacerRow>
              <BodyRow>{headings.map((h, i) => <td key={i}>{i === 0 ? "•" : ""}</td>)}</BodyRow>
            </tbody>
          </ReportTable>
          <Notes><strong>Catatan Proses</strong><NoteValue>FALSE</NoteValue></Notes>
        </Sheet>
        <BlackArea>
          <TopButton>
            <svg width="36" height="48" viewBox="0 0 36 48" aria-hidden="true">
              <path d="M18 0 36 18H27V47H9V18H0z" fill="#2f5597" />
              <path d="M18 0 0 18h9l3-3h-4L18 4z" fill="#4a7fd6" />
              <path d="M9 18h3v26l-3 3zM24 18h3v29l-3-3z" fill="#4a80e0" />
              <path d="M12 16h12v28H12z" fill="#2f5fb8" />
              <path d="M9 47l3-3h12l3 3z" fill="#3a6bd0" />
            </svg>
            <TopText>{"T\nO\nP"}</TopText>
          </TopButton>
        </BlackArea>
      </Workspace>

      <ScrollRow>
        <Icon w={6} box="0 0 10 10" sw={0}><path d="M8 1v8L2 5z" fill="#666666" /></Icon>
        <ScrollThumb />
        <Icon w={6} box="0 0 10 10" sw={0}><path d="M2 1v8l6-4z" fill="#666666" /></Icon>
      </ScrollRow>

      <StatusBar>
        <StatusItem $w={29}>Ready</StatusItem>
        <StatusItem $w={18}><Icon w={9}><path d="M8 13.500H1v-11h14V7M1 5.500h14M3.500 8h3M3.500 10.500h2" /><circle cx="11" cy="11" r="3.500" /><circle cx="11" cy="11" r="1" /></Icon></StatusItem>
        <StatusItem $w={100} $bold>
          <Icon w={9} sw={1.300}><circle cx="7" cy="3" r="1.800" /><path d="M1.500 5.500 5 7v3l-2 4.500M12.500 5.500 9 7v2M5 7h4M5 14.500 7 11M10 10.500l4.500 4.500m0-4.500L10 15" /></Icon>
          Accessibility: Investigate
        </StatusItem>
        <ViewButtons>
          <ViewButton $active aria-label="Normal view"><Icon w={9} color="#555555" sw={1.500}><path d="M1 1.500h14v13H1zM1 6h14M1 10h14M5.500 1.500v13M10.500 1.500v13" /></Icon></ViewButton>
          <ViewButton aria-label="Page layout view"><Icon w={9} color="#555555" sw={1.500}><path d="M1 1.500h14v13H1zM4.500 1.500v13M11.500 1.500v13M6.500 5h3M6.500 8h3M6.500 11h3" /></Icon></ViewButton>
          <ViewButton aria-label="Page break preview"><Icon w={9} color="#555555" sw={1.500}><path d="M1 1.500h14v13H1zM1 9.500h9v-8M5.500 1.500v8" /></Icon></ViewButton>
        </ViewButtons>
        <Zoom>
          <BarButton aria-label="Zoom out"><Icon w={6} box="0 0 10 10" sw={1.500}><path d="M1 5h8" /></Icon></BarButton>
          <ZoomSlider type="range" min="0" max="100" defaultValue="50" aria-label="Zoom" />
          <BarButton aria-label="Zoom in"><Icon w={6} box="0 0 10 10" sw={1.500}><path d="M1 5h8M5 1v8" /></Icon></BarButton>
          <ZoomValue>100%</ZoomValue>
        </Zoom>
      </StatusBar>

      <TaskbarView />
    </Page>
  );
}
